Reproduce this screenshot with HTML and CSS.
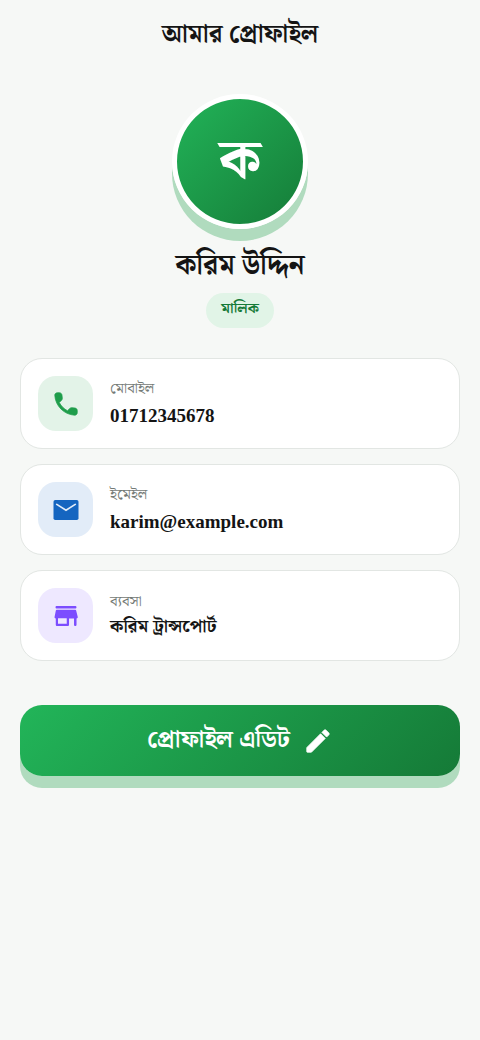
FILE: index.html
```html
<!DOCTYPE html>
<html lang="bn">
<head>
<meta charset="utf-8">
<meta name="viewport" content="width=device-width, initial-scale=1">
<title>আমার প্রোফাইল</title>
<link rel="stylesheet" href="styles.css">
</head>
<body>
<main class="page">
  <h1 class="title">আমার প্রোফাইল</h1>
  <section class="hero">
    <div class="avatar">ক</div>
    <h2 class="name">করিম উদ্দিন</h2>
    <span class="role">মালিক</span>
  </section>
  <dl class="cards">
    <div class="card">
      <span class="tile tile-green"><svg viewBox="0 0 24 24" class="icon icon-bold"><path d="M19.23 15.26l-2.54-.29c-.61-.07-1.21.14-1.64.57l-1.84 1.84c-2.83-1.44-5.15-3.75-6.59-6.59l1.85-1.85c.43-.43.64-1.03.57-1.64l-.29-2.52c-.12-1.01-.97-1.77-1.99-1.77H5.03c-1.13 0-2.07.94-2 2.07.53 8.54 7.36 15.36 15.89 15.89 1.13.07 2.07-.87 2.07-2v-1.73c.01-1.01-.75-1.86-1.76-1.98z"/></svg></span>
      <div class="info"><dt class="label">মোবাইল</dt><dd class="value">01712345678</dd></div>
    </div>
    <div class="card">
      <span class="tile tile-blue"><svg viewBox="0 0 24 24" class="icon"><rect x="2" y="4" width="20" height="16" rx="1.4"/><path class="flap" d="M4.6 7.5L12 12.1l7.4-4.6"/></svg></span>
      <div class="info"><dt class="label">ইমেইল</dt><dd class="value">karim@example.com</dd></div>
    </div>
    <div class="card">
      <span class="tile tile-violet"><svg viewBox="0 0 24 24" class="icon"><path d="M4.6 6h14.8c.55 0 1-.45 1-1s-.45-1-1-1H4.6c-.55 0-1 .45-1 1s.45 1 1 1zm15.56 1.8c-.09-.46-.5-.8-.98-.8H4.82c-.48 0-.89.34-.98.8l-1 5c-.12.62.35 1.2.98 1.2v5c0 .55.45 1 1 1h8.6c.55 0 1-.45 1-1v-5h4v5c0 .55.45 1 1 1s1-.45 1-1v-5c.63 0 1.1-.58.98-1.2l-1.24-5zM12.6 18.2H5.6v-4.4h7v4.4z"/></svg></span>
      <div class="info"><dt class="label">ব্যবসা</dt><dd class="value value-bn">করিম ট্রান্সপোর্ট</dd></div>
    </div>
  </dl>
  <button class="edit" type="button">প্রোফাইল এডিট
    <svg viewBox="0 0 24 24" class="icon icon-bold"><path d="M3 17.46v3.04c0 .28.22.5.5.5h3.04c.13 0 .26-.05.35-.15L17.81 9.94l-3.75-3.75L3.15 17.1c-.1.1-.15.22-.15.36zM20.71 7.04c.39-.39.39-1.02 0-1.41l-2.34-2.34c-.39-.39-1.02-.39-1.41 0l-1.83 1.83 3.75 3.75 1.83-1.83z"/></svg>
  </button>
</main>
</body>
</html>
```

FILE: styles.css
```css
* { box-sizing: border-box; }
body {
  margin: 0;
  background: #f6f8f6;
  color: #141414;
  font-family: "Noto Serif Bengali", "Noto Serif", serif;
}
.page { padding: 16px 20px 40px; }
.title { margin: 0; font-size: 25px; line-height: 38px; text-align: center; }
.hero { display: flex; flex-direction: column; align-items: center; padding-top: 40px; }
.avatar {
  display: flex; align-items: center; justify-content: center;
  width: 136px; height: 135px;
  border: 5px solid #fff; border-radius: 50%;
  background: linear-gradient(135deg, #22b559, #157a37) border-box;
  box-shadow: 0 12px 0 #b0dbbe;
  color: #fff; font-size: 56px; font-weight: 700; line-height: 70px;
}
.name { margin: 18px 0 8px; font-size: 28px; line-height: 38px; }
.role {
  padding: 3px 15px 5px; border-radius: 18px; background: #e1f4e7;
  color: #157a37; font-size: 15px; font-weight: 700; line-height: 27px;
}
.cards { display: grid; gap: 15px; margin: 30px 0 44px; }
.card {
  display: flex; align-items: center; gap: 17px;
  padding: 17px; background: #fff;
  border: 1px solid #e2e6e3; border-radius: 22px;
}
.tile { display: grid; place-items: center; width: 55px; height: 55px; border-radius: 18px; }
.tile-green { background: #e3f3e8; color: #1f9d4b; }
.tile-blue { background: #e2ecf8; color: #1565c0; }
.tile-violet { background: #eee8ff; color: #7c4dff; }
.icon { width: 30px; height: 30px; fill: currentColor; }
.icon-bold { stroke: currentColor; stroke-width: 0.6; }
.flap { fill: none; stroke: #e2ecf8; stroke-width: 1.4; stroke-linecap: round; }
.label { color: #747a76; font-size: 15px; line-height: 22px; }
.value {
  margin: 2px 0 0; font-family: "Liberation Serif", serif;
  font-size: 19px; font-weight: 700; line-height: 28px;
}
.value-bn { margin-top: 0; font-family: "Noto Serif Bengali", serif; font-size: 18px; }
.edit {
  display: flex; align-items: center; justify-content: center; gap: 13px;
  width: 100%; padding: 16px; border: 0; border-radius: 22px;
  background: linear-gradient(135deg, #22b559, #157a37);
  box-shadow: 0 12px 0 #b0dbbe;
  color: #fff; font-family: inherit; font-size: 24px; font-weight: 700; line-height: 39px;
}
```
